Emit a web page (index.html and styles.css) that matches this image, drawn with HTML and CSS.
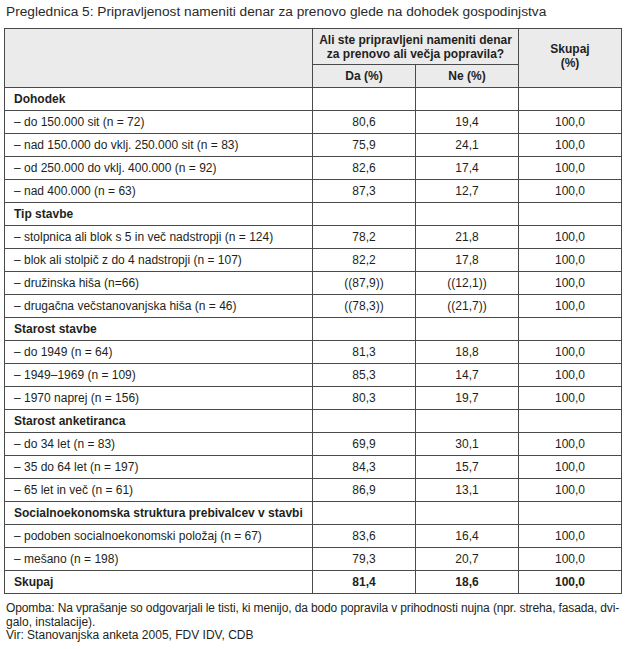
FILE: index.html
```html
<!DOCTYPE html>
<html lang="sl">
<head>
<meta charset="utf-8">
<link rel="stylesheet" href="styles.css">
</head>
<body>
<div class="page">
  <p class="title">Preglednica 5: Pripravljenost nameniti denar za prenovo glede na dohodek gospodinjstva</p>
  <table class="tbl">
    <colgroup>
      <col class="c1"><col class="c2"><col class="c3"><col class="c4">
    </colgroup>
    <thead>
      <tr class="h1">
        <th rowspan="2"></th>
        <th colspan="2">Ali ste pripravljeni nameniti denar<br>za prenovo ali večja popravila?</th>
        <th rowspan="2" class="sk">Skupaj<br>(%)</th>
      </tr>
      <tr class="h2">
        <th>Da (%)</th>
        <th>Ne (%)</th>
      </tr>
    </thead>
    <tbody>
      <tr class="grp"><td>Dohodek</td><td></td><td></td><td></td></tr>
      <tr><td>– do 150.000 sit (n = 72)</td><td>80,6</td><td>19,4</td><td>100,0</td></tr>
      <tr><td>– nad 150.000 do vklj. 250.000 sit (n = 83)</td><td>75,9</td><td>24,1</td><td>100,0</td></tr>
      <tr><td>– od 250.000 do vklj. 400.000 (n = 92)</td><td>82,6</td><td>17,4</td><td>100,0</td></tr>
      <tr><td>– nad 400.000 (n = 63)</td><td>87,3</td><td>12,7</td><td>100,0</td></tr>
      <tr class="grp"><td>Tip stavbe</td><td></td><td></td><td></td></tr>
      <tr><td>– stolpnica ali blok s 5 in več nadstropji (n = 124)</td><td>78,2</td><td>21,8</td><td>100,0</td></tr>
      <tr><td>– blok ali stolpič z do 4 nadstropji (n = 107)</td><td>82,2</td><td>17,8</td><td>100,0</td></tr>
      <tr><td>– družinska hiša (n=66)</td><td>((87,9))</td><td>((12,1))</td><td>100,0</td></tr>
      <tr><td>– drugačna večstanovanjska hiša (n = 46)</td><td>((78,3))</td><td>((21,7))</td><td>100,0</td></tr>
      <tr class="grp"><td>Starost stavbe</td><td></td><td></td><td></td></tr>
      <tr><td>– do 1949 (n = 64)</td><td>81,3</td><td>18,8</td><td>100,0</td></tr>
      <tr><td>– 1949–1969 (n = 109)</td><td>85,3</td><td>14,7</td><td>100,0</td></tr>
      <tr><td>– 1970 naprej (n = 156)</td><td>80,3</td><td>19,7</td><td>100,0</td></tr>
      <tr class="grp"><td>Starost anketiranca</td><td></td><td></td><td></td></tr>
      <tr><td>– do 34 let (n = 83)</td><td>69,9</td><td>30,1</td><td>100,0</td></tr>
      <tr><td>– 35 do 64 let (n = 197)</td><td>84,3</td><td>15,7</td><td>100,0</td></tr>
      <tr><td>– 65 let in več (n = 61)</td><td>86,9</td><td>13,1</td><td>100,0</td></tr>
      <tr class="grp"><td>Socialnoekonomska struktura prebivalcev v stavbi</td><td></td><td></td><td></td></tr>
      <tr><td>– podoben socialnoekonomski položaj (n = 67)</td><td>83,6</td><td>16,4</td><td>100,0</td></tr>
      <tr><td>– mešano (n = 198)</td><td>79,3</td><td>20,7</td><td>100,0</td></tr>
      <tr class="grp total"><td>Skupaj</td><td>81,4</td><td>18,6</td><td>100,0</td></tr>
    </tbody>
  </table>
  <p class="note"><span class="ln">Opomba: Na vprašanje so odgovarjali le tisti, ki menijo, da bodo popravila v prihodnosti nujna (npr. streha, fasada, dvi-</span><span class="ln">galo, instalacije).</span><span class="ln">Vir: Stanovanjska anketa 2005, FDV IDV, CDB</span></p>
</div>
</body>
</html>
```

FILE: styles.css
```css
html, body {
  margin: 0;
  padding: 0;
  background: #fff;
}
body {
  font-family: "Liberation Sans", Arial, sans-serif;
  color: #231f20;
}
.page {
  padding: 4px 8px 0 4px;
}
.title {
  margin: 0 0 8px 2px;
  font-size: 13.7px;
  line-height: 16px;
  color: #2a2a2a;
}
.tbl {
  border-collapse: collapse;
  width: 617px;
  table-layout: fixed;
  font-size: 12px;
  border: 1.5px solid #5a5a5a;
}
.c1 { width: 308px; }
.c2 { width: 103px; }
.c3 { width: 103px; }
.c4 { width: 103px; }
.tbl th, .tbl td {
  border: 1px solid #4a4a4a;
  padding: 0;
  height: 22px;
  text-align: center;
  vertical-align: middle;
}
.tbl th {
  background: #ebebec;
  font-weight: bold;
  line-height: 14px;
}
.tbl .h1 th { height: 35px; }
.tbl .sk { padding-bottom: 4px; }
.tbl td:first-child {
  text-align: left;
  padding-left: 9px;
}
.tbl .grp td { font-weight: bold; }
.note {
  margin: 8px 0 0 2px;
  font-size: 12px;
  line-height: 13.5px;
  color: #231f20;
}
.ln {
  display: block;
  white-space: nowrap;
}
.ln:first-child {
  letter-spacing: -0.12px;
}
```
